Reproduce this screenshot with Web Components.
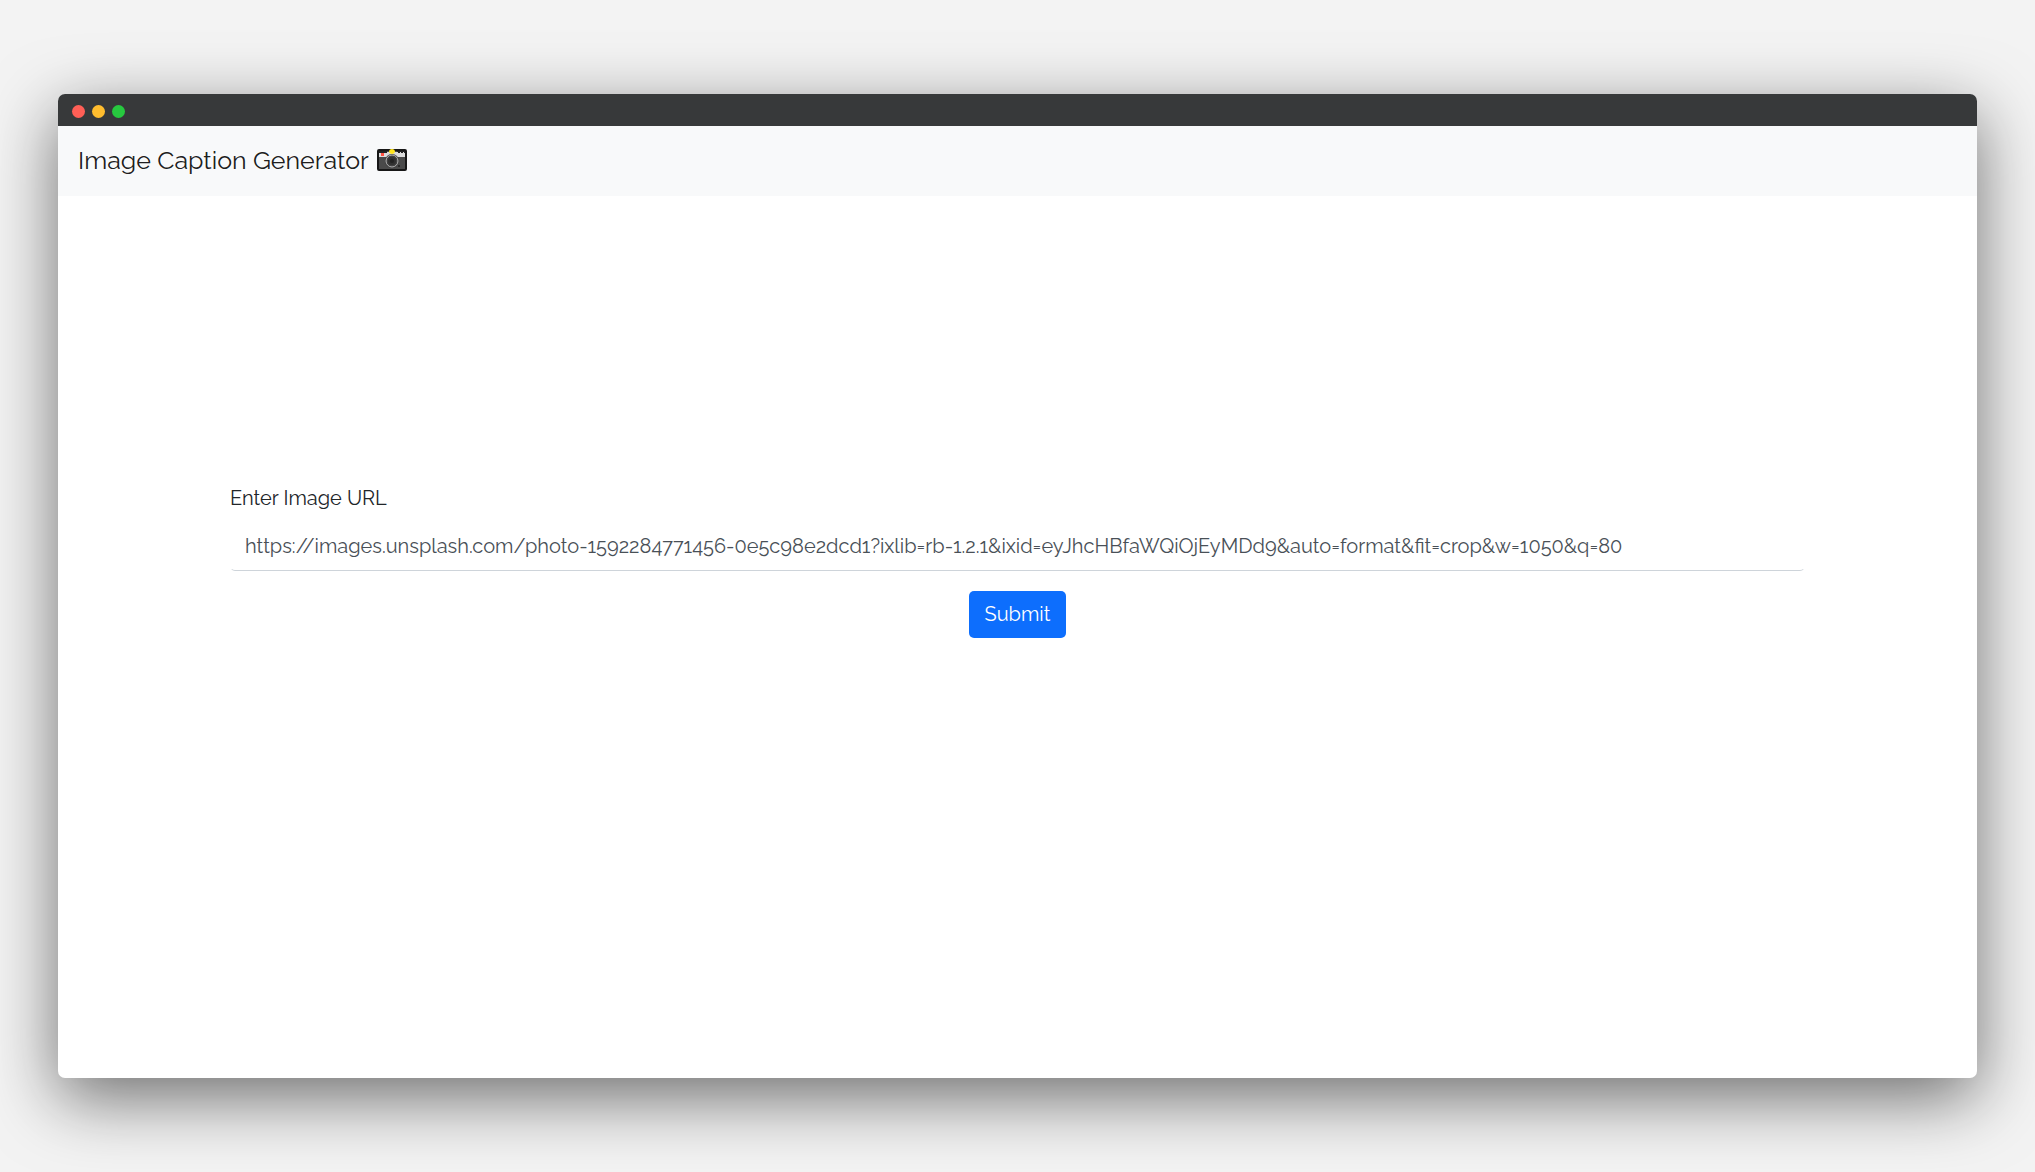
<!DOCTYPE html>
<html lang="en">
<head>
  <meta charset="UTF-8">
  <meta name="viewport" content="width=device-width, initial-scale=1">
  <title>Image Caption Generator</title>
  <style>
    :root {
      --primary: #0d6efd;
      --foreground: #212529;
      --border: #ced4da;
      --light: #f8f9fa;
    }

    body {
      margin: 0;
      min-height: 100vh;
      box-sizing: border-box;
      padding: 94px 58px;
      display: flex;
      background: #f3f3f3;
      color: var(--foreground);
      font-family: Raleway, Lato, "Open Sans", sans-serif;
      font-size: 20px;
      line-height: 30px;
    }
  </style>
</head>
<body>
  <app-window>
    <app-navbar>Image Caption Generator</app-navbar>
    <caption-form></caption-form>
  </app-window>

  <script>
    // Window frame with the three title bar dots
    class AppWindow extends HTMLElement {
      constructor() {
        super();
        this.attachShadow({ mode: 'open' });
      }

      connectedCallback() {
        this.shadowRoot.innerHTML = `
          <style>
            :host {
              flex: 1;
              min-width: 0;
              display: flex;
              flex-direction: column;
              overflow: hidden;
              border-radius: 7px;
              background: #fff;
              box-shadow: 0 20px 68px rgba(0, 0, 0, 0.55);
            }

            .title-bar {
              display: flex;
              align-items: center;
              gap: 7px;
              height: 32px;
              padding: 2px 14px 0;
              box-sizing: border-box;
              background: #37393a;
            }

            .dot {
              width: 13px;
              height: 13px;
              border-radius: 50%;
            }

            .close { background: #ff5f56; }
            .minimize { background: #ffbd2e; }
            .zoom { background: #27c93f; }
          </style>
          <div class="title-bar">
            <span class="dot close"></span>
            <span class="dot minimize"></span>
            <span class="dot zoom"></span>
          </div>
          <slot></slot>
        `;
      }
    }

    class AppNavbar extends HTMLElement {
      constructor() {
        super();
        this.attachShadow({ mode: 'open' });
      }

      connectedCallback() {
        this.shadowRoot.innerHTML = `
          <style>
            :host {
              display: block;
              background: var(--light);
            }

            nav {
              display: flex;
              align-items: center;
              box-sizing: border-box;
              height: 70px;
              padding: 0 20px 2px;
            }

            .brand {
              display: flex;
              align-items: center;
              gap: 8px;
              color: rgba(0, 0, 0, 0.9);
              font-size: 25px;
              text-decoration: none;
            }

            svg {
              width: 30px;
              height: 24px;
            }
          </style>
          <nav>
            <a class="brand" href="#">
              <slot></slot>
              <svg viewBox="0 0 30 24" aria-hidden="true">
                <path d="M11 2V1h8v1z" fill="#222"/>
                <rect x="1" y="2" width="28" height="20" rx="1" fill="#4a4a4a" stroke="#171717" stroke-width="2"/>
                <path d="M2 4h26v5H2z" fill="#dcdcdc"/>
                <path d="M2 3h8v2H2zM20 3h8v2h-1V4h-1v1h-2V4h-1v1h-2V4h-1z" fill="#222"/>
                <rect x="4" y="5" width="3" height="3" fill="#ff5142"/>
                <circle cx="15" cy="13" r="7" fill="#3a3a3a"/>
                <circle cx="15" cy="13" r="6" fill="#414141" stroke="#b5b5b5"/>
                <circle cx="15" cy="13" r="4" fill="#303030"/>
                <circle cx="15" cy="13" r="2" fill="#222"/>
                <circle cx="22" cy="18" r="1" fill="#222"/>
                <path d="M12 4q0-3 3-3t3 3q-1 2-3 2t-3-2z" fill="#ffe51f"/>
              </svg>
            </a>
          </nav>
        `;
      }
    }

    // URL field and submit button
    class CaptionForm extends HTMLElement {
      constructor() {
        super();
        this.attachShadow({ mode: 'open' });
      }

      connectedCallback() {
        this.render();
        this.setupEventListeners();
      }

      render() {
        this.shadowRoot.innerHTML = `
          <style>
            /* one empty column of twelve on each side, plus the gutter */
            :host {
              display: block;
              padding: 287px calc(100% / 12 + 12px) 40px;
            }

            form {
              display: flex;
              flex-direction: column;
            }

            label {
              margin-bottom: 10px;
            }

            input {
              box-sizing: border-box;
              width: 100%;
              height: 48px;
              margin: 0 0 20px;
              padding: 7px 14px 9px;
              border: 1px solid transparent;
              border-bottom-color: var(--border);
              border-radius: 5px;
              outline: none;
              background: #fff;
              color: #495057;
              font: inherit;
              font-variant-numeric: oldstyle-nums;
              font-feature-settings: "onum";
            }

            input:focus {
              border-bottom-color: var(--primary);
            }

            button {
              align-self: center;
              height: 47px;
              padding: 0 16px 2px;
              border: 0;
              border-radius: 5px;
              background: var(--primary);
              color: #fff;
              font: inherit;
              cursor: pointer;
            }

            button:hover {
              background: #0b5ed7;
            }
          </style>
          <form>
            <label for="image-url">Enter Image URL</label>
            <input id="image-url" type="text" value="https://images.unsplash.com/photo-1592284771456-0e5c98e2dcd1?ixlib=rb-1.2.1&amp;ixid=eyJhcHBfaWQiOjEyMDd9&amp;auto=format&amp;fit=crop&amp;w=1050&amp;q=80">
            <button type="submit">Submit</button>
          </form>
        `;
      }

      setupEventListeners() {
        const form = this.shadowRoot.querySelector('form');
        form.addEventListener('submit', function(event) {
          event.preventDefault();
        });
      }
    }

    customElements.define('app-window', AppWindow);
    customElements.define('app-navbar', AppNavbar);
    customElements.define('caption-form', CaptionForm);
  </script>
</body>
</html>
